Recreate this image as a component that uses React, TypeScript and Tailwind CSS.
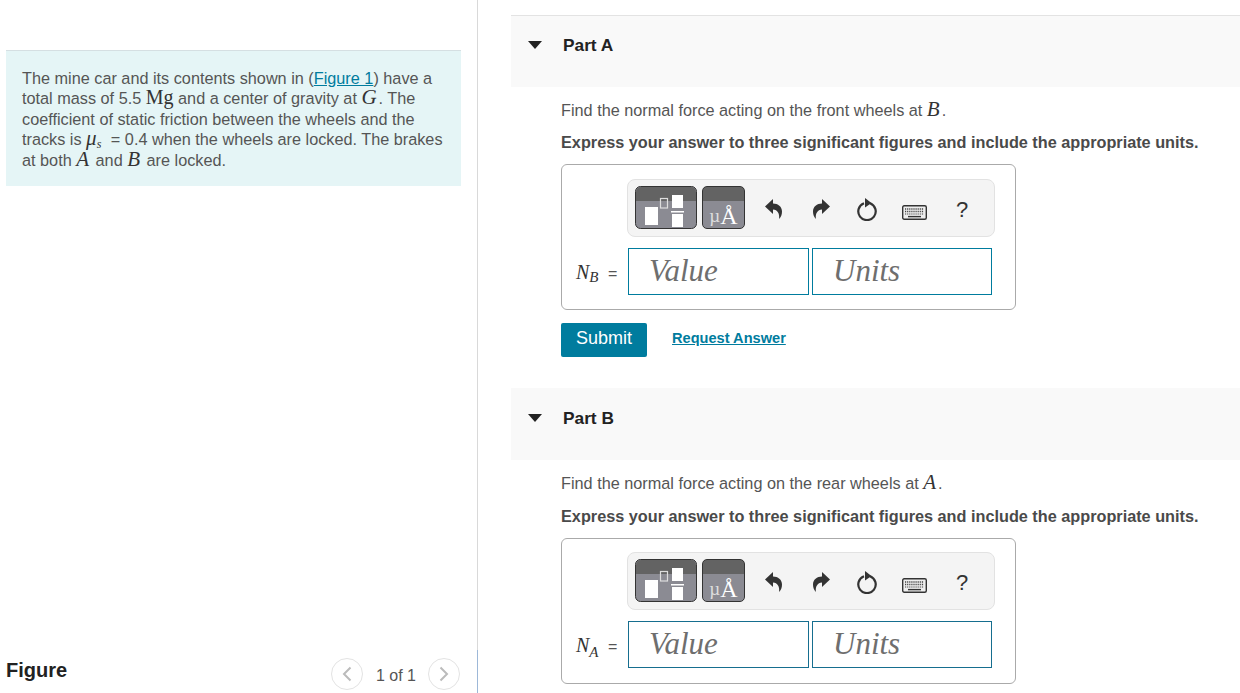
import React from 'react';

const serif = "font-['Liberation_Serif',serif]";

const Math = ({ children }: { children: React.ReactNode }) => (
  <span className={`${serif} italic text-[21px] leading-[0] text-[#333] pr-[2px]`}>{children}</span>
);

const TemplateButton = () => (
  <svg width="62" height="43" viewBox="0 0 62 43" className="block shrink-0">
    <rect x="0.5" y="0.5" width="61" height="42" rx="5" fill="#8b8b93" stroke="#333" />
    <path d="M1 15V6a5 5 0 0 1 5-5h50a5 5 0 0 1 5 5v9z" fill="#636363" />
    <rect x="10" y="21" width="13" height="18" fill="#fff" />
    <rect x="25.5" y="12.5" width="7" height="9.5" fill="none" stroke="#ddd" strokeWidth="1.2" />
    <rect x="37" y="9" width="11" height="13" fill="#fff" />
    <rect x="36" y="25" width="13" height="1.5" fill="#fff" />
    <rect x="37" y="28" width="11" height="13" fill="#fff" />
  </svg>
);

const SymbolButton = () => (
  <div className={`h-[43px] w-[43px] shrink-0 rounded-[5px] border border-[#333] overflow-hidden flex justify-center items-end bg-[linear-gradient(#636363_0,#636363_14px,#8b8b93_14px)] ${serif} text-white`}>
    <span className="text-[19px] leading-[24px] text-[#ddd]">µ</span>
    <span className="text-[24px] leading-[24px]">Å</span>
  </div>
);

const UndoIcon = ({ flip }: { flip?: boolean }) => (
  <svg width="17" height="20" viewBox="0 0 17 20" className={`shrink-0 ${flip ? '-scale-x-100' : ''}`}>
    <path d="M0 7.5L8 0v4.5c5 0 9 3 9 8 0 3-1 5.500-3 7.500 1-5-1.500-9.500-6-9.500V15z" fill="#333" />
  </svg>
);

const Toolbar = () => (
  <div className="ml-[65px] w-[368px] h-[58px] rounded-[8px] border border-[#e2e2e2] bg-[#f4f4f4] flex items-center pl-[7px]">
    <div className="mb-[1px]"><TemplateButton /></div>
    <div className="ml-[5px] mb-[1px]"><SymbolButton /></div>
    <div className="ml-[20px] mt-[2px]"><UndoIcon /></div>
    <div className="ml-[31px] mt-[2px]"><UndoIcon flip /></div>
    <svg width="20" height="23" viewBox="0 0 20 23" className="ml-[27px] shrink-0 mt-[3px]">
      <path d="M7 5.200A8.700 8.700 0 1 0 13 5.200" fill="none" stroke="#333" strokeWidth="2.200" />
      <path d="M8 0l6.500 5L8 9.500z" fill="#333" />
    </svg>
    <svg width="25" height="15" viewBox="0 0 25 15" className="ml-[25px] mt-[8px] shrink-0">
      <rect x="0.7" y="0.7" width="23.6" height="13.6" rx="1.5" fill="#eee" stroke="#333" strokeWidth="1.4" />
      <path d="M3 4h19M3 6.500h19" stroke="#444" strokeWidth="1.400" strokeDasharray="1.200 0.900" />
      <path d="M3 9h19" stroke="#444" strokeWidth="1.200" strokeDasharray="1.200 0.900" />
      <path d="M6 11.600h13" stroke="#333" strokeWidth="1.400" />
    </svg>
    <span className="ml-[29px] mt-[4px] text-[22px] text-[#333] leading-none">?</span>
  </div>
);

const AnswerBox = ({ sub }: { sub: string }) => {
  const isA = sub === 'A';
  const inputColor = isA ? 'border-[#166e8f]' : 'border-[#007c9e]';
  return (
    <div className={`w-[455px] h-[146px] mt-[12px] rounded-[6px] border border-[#aaa] shrink-0 ${isA ? 'pt-[13px]' : 'pt-[14px]'}`}>
      <Toolbar />
      <div className="flex items-center mt-[11px] h-[47px]">
        <span className={`${serif} w-[66px] pl-[14px] text-[#333] whitespace-nowrap text-[20px] leading-none`}>
          <i>N</i>
          <i className={`text-[15px] leading-[0] relative ${isA ? 'top-[5px]' : 'top-[3px]'}`}>{sub}</i>
          <span className="ml-[5px] font-['Liberation_Sans',sans-serif] text-[16px] leading-[0] text-[#555]"> =</span>
        </span>
        <div className={`w-[181px] h-[47px] border ${inputColor} ${serif} italic text-[31px] text-[#6e6e6e] pl-[20px] leading-[43px]`}>Value</div>
        <div className={`ml-[3px] w-[180px] h-[47px] border ${inputColor} ${serif} italic text-[31px] text-[#6e6e6e] pl-[20px] leading-[43px]`}>Units</div>
      </div>
    </div>
  );
};

const Part = ({ title, letter, sub, border, children }: { title: string; letter: string; sub: string; border?: boolean; children?: React.ReactNode }) => (
  <section>
    <div className={`h-[72px] bg-[#f9f9f9] flex pl-[17px] ${border ? 'border-t border-[#e3e3e3]' : ''}`}>
      <svg width="14" height="8" viewBox="0 0 14 8" className={border ? 'mt-[25px]' : 'mt-[26px]'}>
        <path d="M0 0h14L7 8z" fill="#222" />
      </svg>
      <h3 className={`ml-[21px] font-bold text-[#222] text-[17.3px] leading-5 ${border ? 'mt-[19px]' : 'mt-[20px]'}`}>{title}</h3>
    </div>
    <div className="pl-[50px]">
      <p className="mt-[13px] leading-5 text-[16.25px] text-[#555]">
        Find the normal force acting on the {letter === 'B' ? 'front' : 'rear'} wheels at <Math>{letter}</Math>.
      </p>
      <p className={`${border ? 'mt-[12px]' : 'mt-[13px]'} leading-5 text-[16.25px] font-bold text-[#4a4a4a]`}>
        Express your answer to three significant figures and include the appropriate units.
      </p>
      <AnswerBox sub={sub} />
      {children}
    </div>
  </section>
);

export default function App() {
  return (
    <div className="w-[1240px] h-[693px] overflow-hidden flex bg-white font-['Liberation_Sans',sans-serif] text-[#555]">
      {/* left column */}
      <div className="relative w-[478px] shrink-0 h-full border-r border-[#d9d9d9] pl-[6px] pt-[50px] flex flex-col">
        <div className="w-[455px] h-[136px] bg-[#e5f5f6] border-t border-[#d5dfe2] pl-[16px] pt-[17px] pr-[10px] text-[16.25px] leading-[20.4px]">
          The mine car and its contents shown in (<a className="text-[#007c9e] underline">Figure 1</a>) have a total mass of 5.5 <span className={`${serif} text-[20px] leading-[0] text-[#333]`}>Mg</span> and a center of gravity at <Math>G</Math>. The coefficient of static friction between the wheels and the tracks is <Math>μ<sub className="text-[12px] leading-[0] pr-[3px]">s</sub></Math> = 0.4 when the wheels are locked. The brakes at both <Math>A</Math> and <Math>B</Math> are locked.
        </div>
        <div className="mt-auto flex items-center h-[44px] mb-[1px] w-[455px]">
          <span className="font-bold text-[20px] text-[#222]">Figure</span>
          <button className="ml-auto mt-[7px] w-[32px] h-[32px] rounded-full border border-[#e3e3e3] flex items-center justify-center">
            <svg width="10" height="16" viewBox="0 0 10 16"><path d="M8.500 1.500L2 8l6.500 6.500" fill="none" stroke="#bbb" strokeWidth="2" /></svg>
          </button>
          <span className="ml-[13px] text-[16px] mt-[12px]">1 of 1</span>
          <button className="ml-[12px] mr-[1px] mt-[7px] w-[32px] h-[32px] rounded-full border border-[#e3e3e3] flex items-center justify-center">
            <svg width="10" height="16" viewBox="0 0 10 16"><path d="M1.500 1.500L8 8l-6.500 6.500" fill="none" stroke="#bbb" strokeWidth="2" /></svg>
          </button>
        </div>
        <div className="absolute right-[-1px] bottom-0 h-[43px] w-[1px] bg-[#9db8d8]" />
      </div>
      {/* right column */}
      <div className="flex-1 pl-[33px] pt-[15px] min-w-0">
        <Part title="Part A" letter="B" sub="B" border>
          <div className="flex items-center mt-[13px] h-[34px]">
            <button className="w-[86px] h-[34px] bg-[#007c9e] rounded-[2px] text-white text-[18px] pb-[3px]">Submit</button>
            <a className="ml-[25px] pb-[3px] text-[#007c9e] font-bold underline text-[14.6px]">Request Answer</a>
          </div>
        </Part>
        <div className="mt-[31px]">
          <Part title="Part B" letter="A" sub="A" />
        </div>
      </div>
    </div>
  );
}
